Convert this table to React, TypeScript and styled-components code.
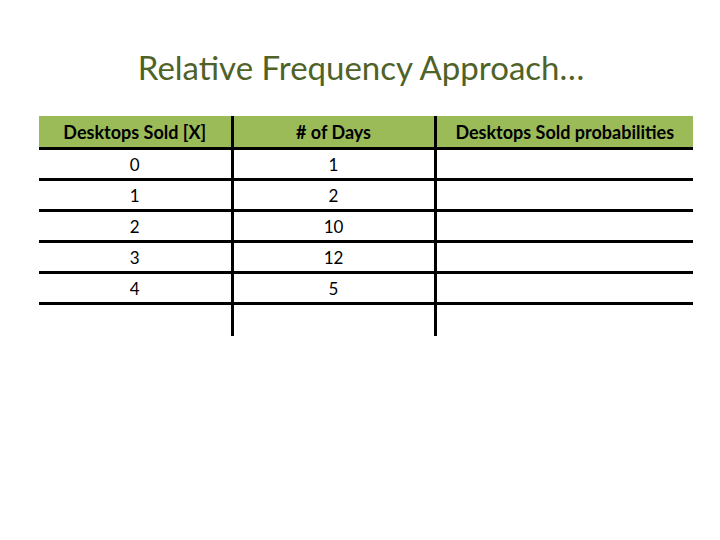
import React from "react";
import styled, { createGlobalStyle } from "styled-components";

const Global = createGlobalStyle`
  html, body { margin: 0; padding: 0; background: #ffffff; }
  body { font-family: Lato, "Open Sans", sans-serif; }
`;

const Page = styled.div`
  width: 720px;
  height: 540px;
  box-sizing: border-box;
  padding-top: 46px;
  display: flex;
  flex-direction: column;
`;

const Title = styled.h1`
  margin: 0;
  height: 70px;
  text-align: center;
  font-family: Lato, sans-serif;
  font-weight: 400;
  font-size: 33px;
  line-height: 42px;
  color: #4f6228;
  padding-left: 2px;
`;

const TableWrap = styled.div`
  padding-left: 39px;
`;

const Table = styled.table`
  border-collapse: collapse;
  table-layout: fixed;
  width: 654px;
  font-family: Lato, sans-serif;
`;

const HeadCell = styled.th<{ $divider?: boolean }>`
  background: #9bbb59;
  height: 31px;
  padding: 0;
  font-weight: 700;
  font-size: 18px;
  color: #000;
  text-align: center;
  white-space: nowrap;
  border-bottom: 3px solid #000;
  border-right: ${(p) => (p.$divider ? "3px solid #000" : "none")};
`;

const Cell = styled.td<{ $divider?: boolean; $last?: boolean }>`
  height: ${(p) => (p.$last ? "31px" : "28px")};
  padding: 0;
  font-size: 17px;
  color: #000;
  text-align: center;
  border-bottom: ${(p) => (p.$last ? "none" : "3px solid #000")};
  border-right: ${(p) => (p.$divider ? "3px solid #000" : "none")};
`;

const rows: [string, string][] = [
  ["0", "1"],
  ["1", "2"],
  ["2", "10"],
  ["3", "12"],
  ["4", "5"],
];

export default function App() {
  return (
    <>
      <Global />
      <Page>
        <Title>Relative Frequency Approach…</Title>
        <TableWrap>
          <Table>
            <colgroup>
              <col style={{ width: 193 }} />
              <col style={{ width: 203 }} />
              <col style={{ width: 258 }} />
            </colgroup>
            <thead>
              <tr>
                <HeadCell $divider>Desktops Sold [X]</HeadCell>
                <HeadCell $divider># of Days</HeadCell>
                <HeadCell>Desktops Sold probabilities</HeadCell>
              </tr>
            </thead>
            <tbody>
              {rows.map(([x, d]) => (
                <tr key={x}>
                  <Cell $divider>{x}</Cell>
                  <Cell $divider>{d}</Cell>
                  <Cell />
                </tr>
              ))}
              <tr>
                <Cell $divider $last />
                <Cell $divider $last />
                <Cell $last />
              </tr>
            </tbody>
          </Table>
        </TableWrap>
      </Page>
    </>
  );
}
